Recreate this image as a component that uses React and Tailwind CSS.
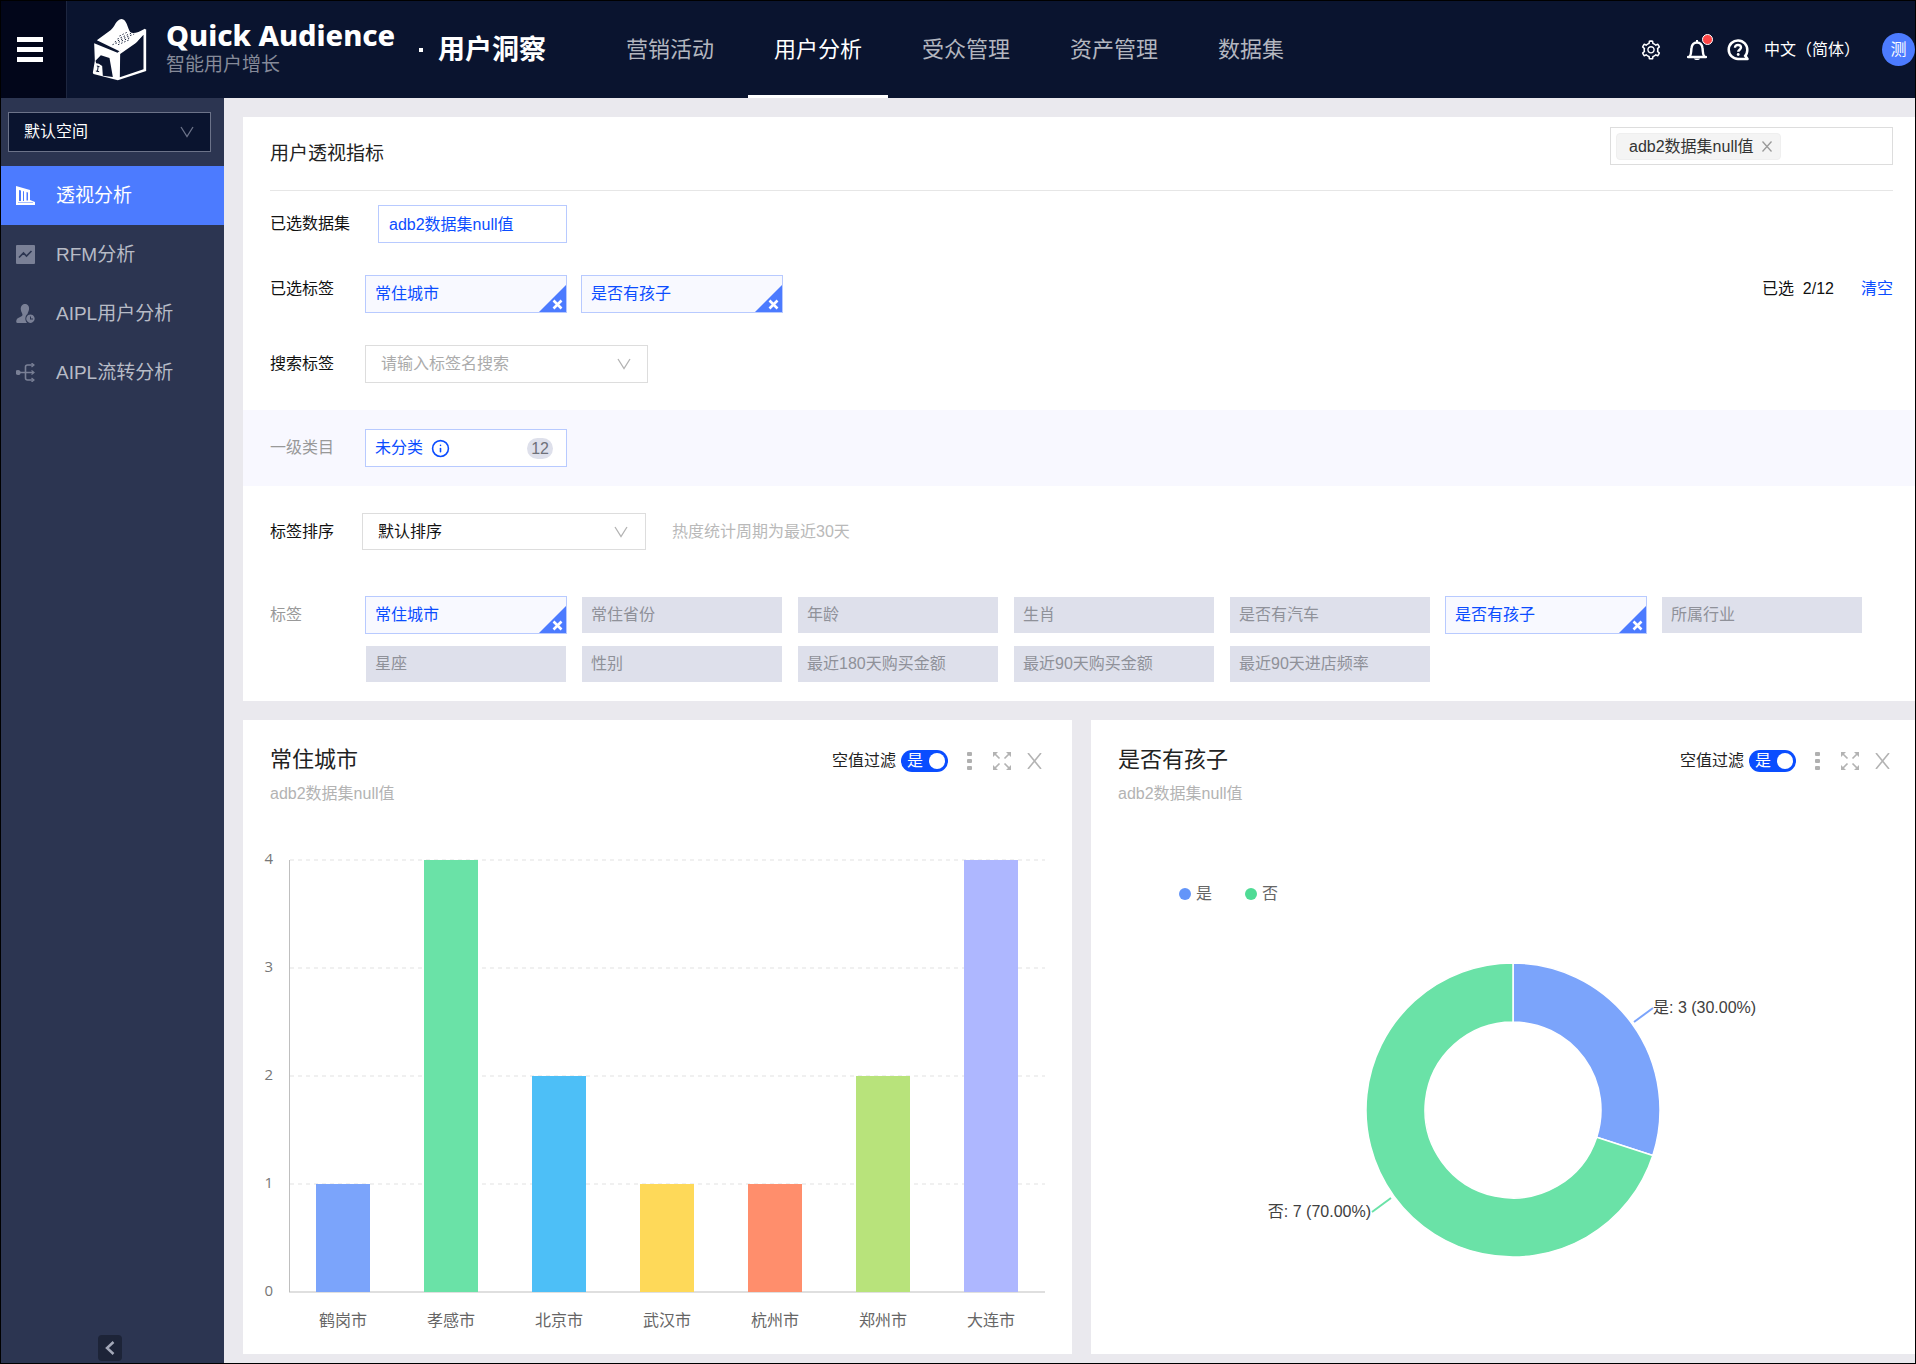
import React, { useState } from "react";
import { AiOutlineSetting } from "react-icons/ai";
import { Info } from "lucide-react";

const NAV = ["营销活动", "用户分析", "受众管理", "资产管理", "数据集"];

const TAGS = [
  "常住城市", "常住省份", "年龄", "生肖", "是否有汽车", "是否有孩子", "所属行业",
  "星座", "性别", "最近180天购买金额", "最近90天购买金额", "最近90天进店频率",
];

const CITIES = [
  { name: "鹤岗市", value: 1, color: "#7ba4fb" },
  { name: "孝感市", value: 4, color: "#6ae2a7" },
  { name: "北京市", value: 2, color: "#4dbff7" },
  { name: "武汉市", value: 1, color: "#fed959" },
  { name: "杭州市", value: 1, color: "#ff8e6c" },
  { name: "郑州市", value: 2, color: "#b8e37b" },
  { name: "大连市", value: 4, color: "#aeb7ff" },
];

function Logo() {
  return (
    <svg viewBox="36 54 164 189" className="h-[63px] w-[55px] shrink-0" aria-hidden="true">
      <path fill="#fff" d="M50 121 L92 90 C104 80 108 58 124 57 C140 58 142 84 150 96 C158 102 174 98 194 86 L198 90 L170 126 L118 154 Z" />
      <path fill="#fff" fillRule="evenodd" d="M42 130 L112 158 L198 88 V213 L113 241 L40 222 L38 218 L44 182 Z M120 162 L119 232 L190 208 V104 L166 130 Z" />
      <path fill="#0a142f" d="M46 182 L62 166 L88 174 L98 231 L68 227 L66 198 L56 191 L48 190 Z" />
      <path stroke="#0a142f" strokeWidth="3" d="M50 198 L58 200 M54 199 L52 214 M47 213 L57 215" fill="none" />
      <g stroke="#0a142f" strokeWidth="3" strokeDasharray="4 6" fill="none">
        <path d="M118 108 L140 97" />
        <path d="M112 117 L160 97" />
        <path d="M104 126 L162 102" />
        <path d="M97 134 L152 112" />
        <path d="M114 134 L146 120" />
      </g>
    </svg>
  );
}

function BellIcon() {
  return (
    <svg viewBox="0 0 20 22" className="h-[22px] w-5" fill="none" aria-hidden="true">
      <path d="M1 18 H19 M3 17 C4.500 15 4 12 4.500 9 C5 5.500 7 3.500 10 3.500 C13 3.500 15 5.500 15.500 9 C16 12 15.500 15 17 17" stroke="#fff" strokeWidth="2.400" strokeLinecap="round" />
      <path d="M10 1 V4" stroke="#fff" strokeWidth="2" />
      <path d="M7 19.500 H13 C12.500 21.500 7.500 21.500 7 19.500 Z" fill="#fff" />
    </svg>
  );
}

function HelpIcon() {
  return (
    <svg viewBox="0 0 22 22" className="h-[22px] w-[22px]" fill="none" aria-hidden="true">
      <path d="M17.500 18 C19 16.500 20.300 14 20.300 11 A9.300 9.300 0 1 0 11 20 H20.500 L18.500 17" stroke="#fff" strokeWidth="2.500" strokeLinejoin="round" />
      <path d="M8 8.800 C8 6.900 9.200 6 11 6 C12.800 6 14 7 14 8.600 C14 10.600 11.200 10.800 11.200 12.800" stroke="#fff" strokeWidth="2.400" />
      <circle cx="11.200" cy="15.500" r="1.400" fill="#fff" />
    </svg>
  );
}

function Chevron({ className }) {
  return (
    <svg viewBox="0 0 14 12" className={"pointer-events-none absolute h-3 w-3.5 " + className} fill="none" stroke="currentColor" strokeWidth="1.300" aria-hidden="true">
      <path d="M1 1 L7 10.500 L13 1" />
    </svg>
  );
}

const SIDE = [
  {
    label: "透视分析",
    icon: <path fill="currentColor" fillRule="evenodd" d="M0 0 L14 4 V14 L19 16 V19 H0 Z M3 4 V15 H5 V4.500 Z M7 5 V15 H8 V5.500 Z M10.500 6 V14.500 H12 V6.500 Z M2 17 H17 V16.500 H2 Z" />,
  },
  {
    label: "RFM分析",
    icon: (
      <>
        <rect width="19" height="19" rx="1" fill="currentColor" />
        <path d="M3 12.500 L7.500 8 L10.500 11 L15.500 6" stroke="#2c3551" strokeWidth="1.600" fill="none" />
      </>
    ),
  },
  {
    label: "AIPL用户分析",
    icon: (
      <>
        <path fill="currentColor" d="M9 0 C12 0 13.500 2.500 13 5.500 C12.700 7.500 11.700 8.500 11.500 10 C9 12 8.500 16 11 19 H1.500 C0 19 0 17.500 0.500 16 C1.500 13 6 13 6.500 11 C6.500 9 5 8 4.800 5.500 C4.500 2.500 6 0 9 0 Z" />
        <path fill="currentColor" fillRule="evenodd" d="M14.500 10.500 A4.200 4.200 0 1 1 14.400 10.500 Z M14 12.500 V15.500 H17 V14.500 H15 V12.500 Z" />
      </>
    ),
  },
  {
    label: "AIPL流转分析",
    icon: (
      <g fill="none" stroke="currentColor" strokeWidth="1.600">
        <circle cx="2" cy="9.500" r="1.800" fill="currentColor" />
        <path d="M3 9.500 H17 M17.500 2 H11.500 Q9.500 2 9.500 4 V15 Q9.500 17 11.500 17 H17.500" />
        <path d="M15.500 0 L18 2 L15.500 4 M15.500 7.500 L18 9.500 L15.500 11.500 M15.500 15 L18 17 L15.500 19" strokeWidth="1.200" />
      </g>
    ),
  },
];

function Tag({ label, selected }) {
  if (!selected) {
    return (
      <button type="button" className="h-[38px] w-[202px] border border-white bg-[#dee0eb] px-[9px] text-left text-[16px] leading-[36px] text-[#8f9199]">
        {label}
      </button>
    );
  }
  return (
    <button type="button" className="relative h-[38px] w-[202px] border border-[#b8caff] bg-[#f8f9ff] px-[9px] text-left text-[16px] leading-[36px] text-[#0b4dff]">
      {label}
      <svg viewBox="0 0 27 27" className="absolute right-0 bottom-0 h-[27px] w-[27px]" aria-hidden="true">
        <path d="M27 0 V27 H0 Z" fill="#4c7bff" />
        <path d="M14.500 15.500 L22.500 23.500 M22.500 15.500 L14.500 23.500" stroke="#fff" strokeWidth="2.600" />
      </svg>
    </button>
  );
}

function CardHeader({ title }) {
  const [on, setOn] = useState(true);
  return (
    <div className="flex items-start justify-between pl-[27px]">
      <div className="pt-[26px]">
        <h2 className="text-[22px] leading-[28px] text-[#222]">{title}</h2>
        <p className="mt-2 text-[16px] leading-[24px] text-[#b3b3b3]">adb2数据集null值</p>
      </div>
      <div className="mt-[30px] flex h-[22px] items-center">
        <label className="flex items-center gap-[5px] text-[16px] leading-[22px] text-[#222]">
          空值过滤
          <input type="checkbox" role="switch" checked={on} onChange={() => setOn(!on)} className="sr-only" />
          <span className="flex h-[22px] w-[47px] items-center justify-between rounded-full bg-[#0a4dff] pr-[3px] pl-1.5 text-[16px] leading-[22px] text-white">
            是<span className="h-4 w-4 rounded-full bg-white" />
          </span>
        </label>
        <button type="button" aria-label="更多" className="ml-[19px]">
          <svg viewBox="0 0 5 18" className="h-[18px] w-[5px]" fill="#b0b0b0"><rect width="5" height="4" rx="1" /><rect y="7" width="5" height="4" rx="1" /><rect y="14" width="5" height="4" rx="1" /></svg>
        </button>
        <button type="button" aria-label="全屏" className="ml-[21px]">
          <svg viewBox="0 0 18 18" className="h-[18px] w-[18px]" fill="#b3b3b3" stroke="#b3b3b3">
            <path stroke="none" d="M0 0 H5 L0 5 Z M18 0 V5 L13 0 Z M0 18 V13 L5 18 Z M18 18 H13 L18 13 Z" />
            <path strokeWidth="1.700" d="M1.500 1.500 L6.500 6.500 M16.500 1.500 L11.500 6.500 M1.500 16.500 L6.500 11.500 M16.500 16.500 L11.500 11.500" />
          </svg>
        </button>
        <button type="button" aria-label="关闭" className="ml-4">
          <svg viewBox="0 0 15 16" className="h-4 w-[15px]" fill="none" stroke="#b3b3b3" strokeWidth="1.600"><path d="M1 0 L14 16 M14 0 L1 16" /></svg>
        </button>
      </div>
    </div>
  );
}

function BarChart() {
  const base = 482;
  return (
    <svg viewBox="0 0 829 543" className="block w-full" role="img" aria-label="常住城市">
      {[0, 1, 2, 3, 4].map((v) => (
        <g key={v}>
          {v > 0 && <path d={`M47 ${base - v * 108} H802`} stroke="#ececec" strokeWidth="1.500" strokeDasharray="4 4" />}
          <text x="30" y={base + 4 - v * 108} textAnchor="end" fontSize="15" fill="#777" fontFamily="'Open Sans', sans-serif">{v}</text>
        </g>
      ))}
      <path d="M46 482 H802" stroke="#d4d4d4" strokeWidth="1.500" />
      <path d="M46.500 50 V482" stroke="#bfbfbf" />
      {CITIES.map((c, i) => (
        <g key={c.name}>
          <rect x={73 + i * 108} y={base - c.value * 108} width="54" height={c.value * 108} fill={c.color} />
          <text x={100 + i * 108} y="516" textAnchor="middle" fontSize="16" fill="#666">{c.name}</text>
        </g>
      ))}
    </svg>
  );
}

function DonutChart() {
  const cx = 422;
  const cy = 300;
  const R = 147;
  const r = 88;
  const a = (0.3 * 360 - 90) * (Math.PI / 180);
  const p = (rad) => `${cx + rad * Math.cos(a)} ${cy + rad * Math.sin(a)}`;
  return (
    <svg viewBox="0 0 824 543" className="block w-full" role="img" aria-label="是否有孩子">
      <circle cx="94" cy="84" r="6" fill="#6395f9" />
      <text x="105" y="89" fontSize="16" fill="#666">是</text>
      <circle cx="160" cy="84" r="6" fill="#4fdb95" />
      <text x="171" y="89" fontSize="16" fill="#666">否</text>
      <path d={`M${cx} ${cy - R} A${R} ${R} 0 0 1 ${p(R)} L${p(r)} A${r} ${r} 0 0 0 ${cx} ${cy - r} Z`} fill="#7ba4fb" stroke="#fff" strokeWidth="1.500" />
      <path d={`M${cx} ${cy - R} A${R} ${R} 0 1 0 ${p(R)} L${p(r)} A${r} ${r} 0 1 1 ${cx} ${cy - r} Z`} fill="#6ae2a7" stroke="#fff" strokeWidth="1.500" />
      <path d="M543 212 L562 198" stroke="#7ba4fb" strokeWidth="2" />
      <text x="562" y="203" fontSize="16" fill="#404040">是: 3 (30.00%)</text>
      <path d="M300 388 L281 402" stroke="#6ae2a7" strokeWidth="2" />
      <text x="280" y="407" textAnchor="end" fontSize="16" fill="#404040">否: 7 (70.00%)</text>
    </svg>
  );
}

export default function App() {
  return (
    <div className="flex min-h-screen flex-col overflow-hidden border border-black bg-[#eae9ee] font-['Liberation_Sans','Noto_Sans_CJK_SC',sans-serif] text-[16px]">
      <header className="flex h-[97px] shrink-0 items-center bg-[#0a142f]">
        <button type="button" aria-label="菜单" className="flex h-full w-[66px] shrink-0 flex-col items-start justify-center gap-[5px] border-r border-[#1d2640] bg-[#02061a] pl-4">
          <span className="h-[5px] w-[26px] bg-white" />
          <span className="h-[5px] w-[26px] bg-white" />
          <span className="h-[5px] w-[26px] bg-white" />
        </button>
        <div className="flex w-[533px] shrink-0 items-center pl-[25px]">
          <Logo />
          <div className="ml-[19px] w-[253px] whitespace-nowrap">
            <div className="font-['Noto_Sans',sans-serif] text-[29px] leading-[30px] font-extrabold text-white">Quick Audience</div>
            <div className="text-[19px] leading-[30px] text-[#858a99]">智能用户增长</div>
          </div>
          <span className="h-1 w-1 shrink-0 bg-white" />
          <h1 className="ml-[15px] text-[27px] leading-[36px] font-bold whitespace-nowrap text-white">用户洞察</h1>
        </div>
        <nav className="flex h-full gap-2">
          {NAV.map((n, i) => (
            <a
              key={n}
              href="#"
              className={
                "flex items-center border-y-[3px] border-t-transparent px-[26px] text-[22px] whitespace-nowrap " +
                (i === 1 ? "border-b-white text-white" : "border-b-transparent text-[#b3b6bf]")
              }
            >
              {n}
            </a>
          ))}
        </nav>
        <div className="ml-auto flex shrink-0 items-center text-white">
          <button type="button" aria-label="设置"><AiOutlineSetting className="h-[22px] w-[22px]" /></button>
          <button type="button" aria-label="通知" className="relative ml-[25px]">
            <BellIcon />
            <span className="absolute -top-[5px] -right-1.5 h-[11px] w-[11px] rounded-full border border-white bg-[#ff4646]" />
          </button>
          <button type="button" aria-label="帮助" className="ml-5"><HelpIcon /></button>
          <button type="button" className="ml-[15px] text-[16px] leading-[22px] whitespace-nowrap">中文（简体）</button>
          <span className="ml-[22px] flex h-[33px] w-[33px] items-center justify-center rounded-full bg-[#4c7bff] text-[16px]">测</span>
        </div>
      </header>

      <div className="flex flex-1">
        <aside className="flex w-[223px] shrink-0 flex-col bg-[#2c3551]">
          <div className="relative mt-3.5 mr-[13px] ml-[7px] text-white">
            <select aria-label="空间" className="h-10 w-full appearance-none border border-[#6c7389] bg-[#0a142f] pl-[15px] text-[16px]">
              <option>默认空间</option>
            </select>
            <Chevron className="top-3.5 right-[17px] text-[#6c7389]" />
          </div>
          <nav className="mt-3.5">
            {SIDE.map((s, i) => (
              <a
                key={s.label}
                href="#"
                className={
                  "flex h-[59px] items-center gap-[21px] pl-[15px] text-[19px] " +
                  (i === 0 ? "bg-[#4c7bff] text-white" : "text-[#b7bbc6]")
                }
              >
                <svg viewBox="0 0 19 19" className={"h-[19px] w-[19px] " + (i === 0 ? "text-white" : "text-[#7a8096]")} aria-hidden="true">
                  {s.icon}
                </svg>
                <span className="pt-0.5">{s.label}</span>
              </a>
            ))}
          </nav>
          <button type="button" aria-label="收起" className="mt-auto mb-0.5 ml-[97px] flex h-[26px] w-6 items-center justify-center rounded-sm bg-[#1d2438]">
            <svg viewBox="0 0 10 14" className="h-3.5 w-2.5" fill="none" stroke="#a3a8b8" strokeWidth="2.500"><path d="M8.500 1 L2 7 L8.500 13" /></svg>
          </button>
        </aside>

        <main className="flex min-w-0 flex-1 flex-col pt-[19px] pb-[9px] pl-[19px]">
          <section className="bg-white pb-[18px]">
            <div className="mr-[22px] ml-[27px] flex h-[74px] items-start justify-between border-b border-[#e6e6e6]">
              <h2 className="pt-[23px] text-[19px] leading-[28px] text-[#222]">用户透视指标</h2>
              <div className="mt-2.5 flex h-[38px] w-[283px] items-center border border-[#ddd] px-[5px]">
                <span className="flex h-[27px] items-center gap-2 rounded-sm border border-[#efefef] bg-[#f4f4f4] pr-2 pl-3 text-[16px] leading-[25px] text-[#333]">
                  adb2数据集null值
                  <button type="button" aria-label="移除">
                    <svg viewBox="0 0 10 11" className="h-[11px] w-2.5" fill="none" stroke="#999" strokeWidth="1.300"><path d="M0.500 0.500 L9.500 10.500 M9.500 0.500 L0.500 10.500" /></svg>
                  </button>
                </span>
              </div>
            </div>

            <div className="mt-3.5 flex items-center pl-[27px] text-[#111]">
              <span className="w-[108px] shrink-0">已选数据集</span>
              <span className="h-[38px] w-[189px] border border-[#b8caff] px-2.5 leading-[37px] text-[#0b4dff]">adb2数据集null值</span>
            </div>

            <div className="mt-8 flex items-start pr-[22px] pl-[27px] text-[#111]">
              <span className="w-[95px] shrink-0 leading-[28px]">已选标签</span>
              <div className="flex gap-3.5">
                <Tag label="常住城市" selected />
                <Tag label="是否有孩子" selected />
              </div>
              <span className="ml-auto leading-[28px]">已选&nbsp; 2/12</span>
              <button type="button" className="ml-[27px] leading-[28px] text-[#0b4dff]">清空</button>
            </div>

            <div className="mt-8 flex items-center pl-[27px] text-[#111]">
              <label htmlFor="tag-search" className="w-[95px] shrink-0">搜索标签</label>
              <div className="relative w-[283px]">
                <input id="tag-search" type="text" placeholder="请输入标签名搜索" className="block h-[38px] w-full border border-[#ddd] pl-[15px] placeholder:text-[#ababab]" />
                <Chevron className="top-[13px] right-[17px] text-[#b3b3b3]" />
              </div>
            </div>

            <div className="mt-[27px] flex items-center bg-[#f8f8ff] py-[19px] pl-[27px]">
              <span className="w-[95px] shrink-0 text-[#999]">一级类目</span>
              <button type="button" className="flex h-[38px] w-[202px] items-center border border-[#b8caff] bg-white pr-[13px] pl-[9px] text-[#0b4dff]">
                未分类
                <Info className="ml-2 h-[19px] w-[19px]" strokeWidth={2} />
                <span className="ml-auto rounded-full bg-[#dee0eb] px-1 leading-[21px] text-[#6f717a]">12</span>
              </button>
            </div>

            <div className="mt-[27px] flex items-center pl-[27px] text-[#111]">
              <label htmlFor="tag-sort" className="w-[92px] shrink-0">标签排序</label>
              <div className="relative w-[284px]">
                <select id="tag-sort" className="block h-[37px] w-full appearance-none border border-[#ddd] bg-white pl-[15px]">
                  <option>默认排序</option>
                </select>
                <Chevron className="top-[13px] right-[18px] text-[#b3b3b3]" />
              </div>
              <span className="ml-[26px] text-[#b9b9b9]">热度统计周期为最近30天</span>
            </div>

            <div className="mt-[46px] flex items-start pr-[22px] pl-[27px]">
              <span className="w-[95px] shrink-0 leading-[38px] text-[#999]">标签</span>
              <div className="flex flex-1 flex-wrap gap-x-3.5 gap-y-[11px]">
                {TAGS.map((t) => (
                  <Tag key={t} label={t} selected={t === "常住城市" || t === "是否有孩子"} />
                ))}
              </div>
            </div>
          </section>

          <div className="mt-[19px] grid flex-1 grid-cols-[829fr_824fr] gap-[19px]">
            <section className="flex flex-col bg-white">
              <div className="pr-[30px]"><CardHeader title="常住城市" /></div>
              <div className="mt-auto pb-px"><BarChart /></div>
            </section>
            <section className="flex flex-col bg-white">
              <div className="pr-[25px]"><CardHeader title="是否有孩子" /></div>
              <div className="mt-auto pb-px"><DonutChart /></div>
            </section>
          </div>
        </main>
      </div>
    </div>
  );
}
